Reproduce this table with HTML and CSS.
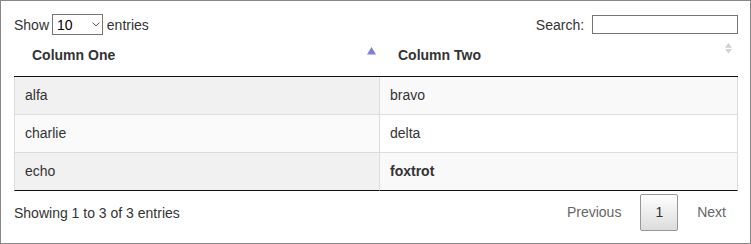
FILE: index.html
```html
<!DOCTYPE html>
<html lang="en">
<head>
<meta charset="utf-8">
<title>Table</title>
<link rel="stylesheet" href="styles.css">
</head>
<body>
<div class="frame">
  <div class="controls">
    <label class="length">Show <span class="select-wrap"><select class="length-select"><option>10</option><option>25</option><option>50</option><option>100</option></select><svg class="chevron" width="8" height="5" viewBox="0 0 8 5"><path d="M0.5 0.5 L4 4 L7.5 0.5" fill="none" stroke="#555" stroke-width="1"/></svg></span> entries</label>
    <label class="filter">Search: <input class="filter-input" type="search"></label>
  </div>

  <table class="grid">
    <colgroup><col class="col-one"><col></colgroup>
    <thead>
      <tr>
        <th class="sorted">Column One
          <svg class="sort-icon" width="9" height="8" viewBox="0 0 9 8"><path d="M4.5 0 L9 7.5 L0 7.5 Z" fill="#7f7fd9"/></svg>
        </th>
        <th>Column Two
          <svg class="sort-icon both" width="9" height="11" viewBox="0 0 9 11"><path d="M4.5 0 L8 4.8 L1 4.8 Z" fill="#d0d0d0"/><path d="M1 6 L8 6 L4.5 10.8 Z" fill="#d6d6d6"/></svg>
        </th>
      </tr>
    </thead>
    <tbody>
      <tr class="odd"><td>alfa</td><td>bravo</td></tr>
      <tr class="even"><td>charlie</td><td>delta</td></tr>
      <tr class="odd"><td>echo</td><td><b>foxtrot</b></td></tr>
    </tbody>
  </table>

  <div class="footer">
    <div class="info">Showing 1 to 3 of 3 entries</div>
    <div class="paginate">
      <span class="page-btn disabled">Previous</span>
      <span class="page-btn current">1</span>
      <span class="page-btn disabled">Next</span>
    </div>
  </div>
</div>
</body>
</html>
```

FILE: styles.css
```css
html, body {
  margin: 0;
  padding: 0;
  background: #fff;
}

.frame {
  box-sizing: border-box;
  height: 244px;
  border: 1px solid #888;
  padding: 13px 12px 12px 13px;
  font-family: "Liberation Sans", Arial, sans-serif;
  font-size: 14px;
  color: #333;
}

.controls {
  display: flex;
  justify-content: space-between;
  align-items: center;
  height: 21px;
}

.length, .filter {
  display: flex;
  align-items: center;
  white-space: pre;
}

.select-wrap {
  position: relative;
  display: inline-block;
  width: 51px;
  height: 21px;
  margin-left: -1px;
}

.length-select {
  box-sizing: border-box;
  appearance: none;
  -webkit-appearance: none;
  width: 51px;
  height: 21px;
  margin: 0;
  padding: 0 0 0 4px;
  border: 1px solid #767676;
  border-radius: 0;
  background: #fff;
  color: #000;
  font-family: "Liberation Sans", Arial, sans-serif;
  font-size: 14px;
}

.chevron {
  position: absolute;
  left: 40px;
  top: 8px;
  pointer-events: none;
}

.filter-input {
  box-sizing: border-box;
  width: 146px;
  height: 19px;
  margin-left: 4px;
  padding: 1px 2px;
  border: 1px solid #767676;
  border-radius: 0;
  font-size: 13px;
}

.grid {
  width: 100%;
  table-layout: fixed;
  border-collapse: separate;
  border-spacing: 0;
  line-height: 21px;
}

.col-one {
  width: 366px;
}

.grid th {
  position: relative;
  padding: 10px 18px;
  text-align: left;
  font-weight: bold;
  border-bottom: 1px solid #111;
}

.sort-icon {
  position: absolute;
  right: 4px;
  top: 12px;
}

.sort-icon.both {
  right: 5px;
  top: 8px;
}

.grid td {
  padding: 8px 10px;
  border-top: 1px solid #ddd;
  border-right: 1px solid #ddd;
}

.grid td:first-child {
  border-left: 1px solid #ddd;
}

.grid tbody tr:first-child td {
  border-top: none;
}

.grid tbody tr:last-child td {
  border-bottom: 1px solid #111;
}

.odd td {
  background: #f9f9f9;
}

.odd td:first-child {
  background: #f1f1f1;
}

.even td {
  background: #fff;
}

.even td:first-child {
  background: #fafafa;
}

.footer {
  display: flex;
  justify-content: space-between;
  align-items: center;
  padding-top: 3px;
}

.paginate {
  display: flex;
  gap: 4px;
  margin-right: -3px;
}

.page-btn {
  box-sizing: border-box;
  padding: 7px 14px;
  line-height: 21px;
  border: 1px solid transparent;
  border-radius: 2px;
  color: #333;
}

.page-btn.disabled {
  color: #666;
}

.page-btn.current {
  border-color: #979797;
  background: linear-gradient(to bottom, #fff 0%, #dcdcdc 100%);
}
```
